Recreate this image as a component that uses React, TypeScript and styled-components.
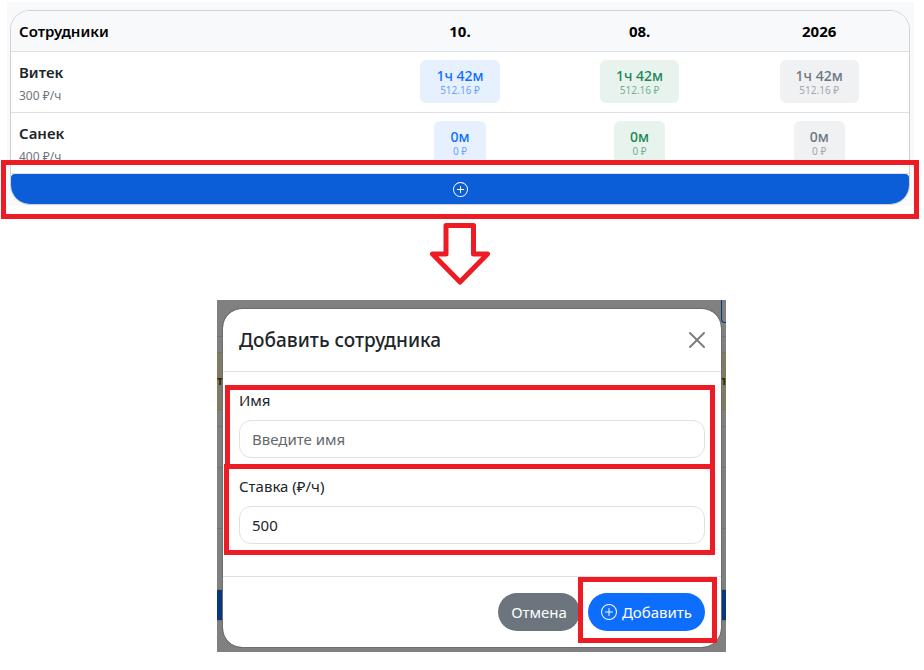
import React, { useState } from "react";
import styled, { createGlobalStyle } from "styled-components";
import { BsPlusCircle } from "react-icons/bs";

const GlobalStyle = createGlobalStyle`
  *, *::before, *::after { box-sizing: border-box; }
  body {
    margin: 0;
    background: #fff;
    color: #212529;
    font: 16px/24px "Noto Sans", "Open Sans", sans-serif;
  }
  button, input { font: inherit; }
`;

type Tone = "blue" | "green" | "gray";

const tones: Record<Tone, { text: string; back: string }> = {
  blue: { text: "#0d6efd", back: "#e7f0ff" },
  green: { text: "#198754", back: "#e8f3ee" },
  gray: { text: "#6c757d", back: "#f0f1f2" },
};

const Page = styled.main`
  padding: 2px 10px 18px 7px;
`;

const Shell = styled.section`
  padding: 8px 4px 1px 3px;
  background: #f8f9fa;
`;

const Card = styled.div`
  border: 1px solid #cfd2d5;
  border-radius: 20px;
  background: #fff;
`;

const Table = styled.table`
  width: 100%;
  table-layout: fixed;
  border-collapse: separate;
  border-spacing: 0;
`;

const HeadCell = styled.th<{ $lead?: boolean }>`
  width: ${(p) => (p.$lead ? "40%" : "20%")};
  height: 41px;
  padding: 0 8px;
  border-bottom: 1px solid #dee2e6;
  background: #f8f9fa;
  color: #000;
  font-size: 15px;
  font-weight: ${(p) => (p.$lead ? 600 : 700)};
  text-align: ${(p) => (p.$lead ? "left" : "center")};
  &:first-child { border-top-left-radius: 19px; }
  &:last-child { border-top-right-radius: 19px; }
`;

const NameCell = styled.th`
  height: 61px;
  padding: 8px 8px 4px;
  border-bottom: 1px solid #dee2e6;
  font-size: 15px;
  font-weight: 600;
  text-align: left;
`;

const Rate = styled.small`
  display: block;
  color: #6c757d;
  font-size: 12px;
  font-weight: 400;
  line-height: 24px;
`;

const Cell = styled.td`
  padding: 8px 0 0;
  border-bottom: 1px solid #dee2e6;
  text-align: center;
  vertical-align: top;
`;

const Chip = styled.span<{ $tone: Tone }>`
  display: inline-block;
  padding: 8px 16px 7px;
  border-radius: 6px;
  background: ${(p) => tones[p.$tone].back};
  color: ${(p) => tones[p.$tone].text};
  font-size: 14px;
  font-weight: 500;
  line-height: 16px;
  vertical-align: top;
`;

const Money = styled.small`
  display: block;
  font-size: 10px;
  font-weight: 400;
  line-height: 12px;
  opacity: 0.6;
`;

const Anchor = styled.div`
  position: relative;
`;

const Mark = styled.span<{ $inset: string }>`
  position: absolute;
  inset: ${(p) => p.$inset};
  border: 5px solid #ed1c24;
  pointer-events: none;
`;

const AddBar = styled.button`
  display: flex;
  width: 100%;
  height: 30px;
  align-items: center;
  justify-content: center;
  border: 0;
  border-radius: 4px 4px 19px 19px;
  background: #0b5ed7;
  color: #fff;
`;

const Arrow = styled.svg`
  display: block;
  margin: 17px auto 15px;
`;

const DialogRow = styled.section`
  display: grid;
  grid-template-columns: 210fr 509fr 188fr;
`;

const Backdrop = styled.div`
  display: grid;
  grid-column: 2;
  overflow: hidden;
  background: #808080;
  > * { grid-area: 1 / 1; }
`;

const Behind = styled.div`
  display: flex;
  flex-direction: column;
`;

const Strip = styled.div<{ $height: number; $back?: string; $line?: string }>`
  display: flex;
  height: ${(p) => p.$height}px;
  align-items: center;
  justify-content: space-between;
  border-bottom: 1px solid ${(p) => p.$line ?? "#6f7173"};
  background: ${(p) => p.$back ?? "transparent"};
  color: #3a2800;
  font-size: 12px;
  font-weight: 700;
`;

const Corner = styled.span`
  width: 6px;
  height: 23px;
  margin: 0 -1px auto auto;
  border: solid #07377f;
  border-width: 0 0 1px 1px;
  border-bottom-left-radius: 4px;
`;

const Dialog = styled.form`
  margin: 8px 4px 4px 5px;
  border: 1px solid #6c6d6e;
  border-radius: 20px;
  background: #fff;
  background-clip: padding-box;
`;

const DialogHead = styled.header`
  display: flex;
  align-items: center;
  justify-content: space-between;
  padding: 16px;
  border-bottom: 1px solid #dee2e6;
`;

const Title = styled.h2`
  margin: 0;
  font-size: 19px;
  font-weight: 500;
  line-height: 30px;
`;

const Close = styled.button`
  display: flex;
  padding: 0;
  border: 0;
  background: none;
  color: #000;
  opacity: 0.5;
`;

const Fields = styled.div`
  display: grid;
  gap: 16px;
  padding: 16px 16px 32px;
`;

const Label = styled.label`
  display: block;
  margin-bottom: 8px;
  font-size: 15px;
`;

const Input = styled.input`
  display: block;
  width: 100%;
  height: 38px;
  padding: 0 12px;
  border: 1px solid #dee2e6;
  border-radius: 12px;
  outline: 0;
  background: #fff;
  color: #212529;
  font-size: 15px;
  &::placeholder { color: #63686d; opacity: 1; }
`;

const DialogFoot = styled.footer`
  display: flex;
  justify-content: flex-end;
  gap: 8px;
  padding: 16px;
  border-top: 1px solid #dee2e6;
`;

const Button = styled.button<{ $primary?: boolean }>`
  display: flex;
  height: 38px;
  align-items: center;
  gap: 5px;
  padding: 0 13px;
  border: 0;
  border-radius: 19px;
  background: ${(p) => (p.$primary ? "#0d6efd" : "#6c757d")};
  color: #fff;
  font-size: 15px;
`;

const employees = [
  { name: "Витек", rate: "300 ₽/ч", time: "1ч 42м", money: "512.16 ₽" },
  { name: "Санек", rate: "400 ₽/ч", time: "0м", money: "0 ₽" },
];

const columns: { label: string; tone: Tone }[] = [
  { label: "10.", tone: "blue" },
  { label: "08.", tone: "green" },
  { label: "2026", tone: "gray" },
];

export default function App() {
  const [name, setName] = useState("");
  const [rate, setRate] = useState("500");

  return (
    <Page>
      <GlobalStyle />
      <Shell>
        <Card>
          <Table>
            <thead>
              <tr>
                <HeadCell $lead>Сотрудники</HeadCell>
                {columns.map((c) => (
                  <HeadCell key={c.label}>{c.label}</HeadCell>
                ))}
              </tr>
            </thead>
            <tbody>
              {employees.map((e) => (
                <tr key={e.name}>
                  <NameCell scope="row">
                    {e.name}
                    <Rate>{e.rate}</Rate>
                  </NameCell>
                  {columns.map((c) => (
                    <Cell key={c.label}>
                      <Chip $tone={c.tone}>
                        {e.time}
                        <Money>{e.money}</Money>
                      </Chip>
                    </Cell>
                  ))}
                </tr>
              ))}
            </tbody>
          </Table>
          <Anchor>
            <AddBar type="button" aria-label="Добавить сотрудника">
              <BsPlusCircle size={15} />
            </AddBar>
            <Mark $inset="-14px -10px -15px" />
          </Anchor>
        </Card>
      </Shell>

      <Arrow width="62" height="62" viewBox="0 0 62 62" aria-hidden="true">
        <path
          d="M16 2.5H43.5V31H57.5L30 59L2.5 31H16Z"
          fill="#fff"
          stroke="#ed1c24"
          strokeWidth="5"
          strokeLinejoin="round"
        />
      </Arrow>

      <DialogRow>
        <Backdrop>
          <Behind aria-hidden="true">
            <Strip $height={37}>
              <Corner />
            </Strip>
            <Strip $height={16} $line="#807349" />
            <Strip $height={57} $back="#807a67" $line="#807349">
              <span>т</span>
              <span>п</span>
            </Strip>
            <Strip $height={17} />
            <Strip $height={41} />
            <Strip $height={61} />
            <Strip $height={61} />
            <Strip $height={31} $back="#07377f" />
          </Behind>
          <Dialog onSubmit={(e) => e.preventDefault()}>
            <DialogHead>
              <Title>Добавить сотрудника</Title>
              <Close type="button" aria-label="Закрыть">
                <svg width="16" height="16" viewBox="0 0 16 16" fill="currentColor">
                  <path d="M.293.293a1 1 0 0 1 1.414 0L8 6.586 14.293.293a1 1 0 1 1 1.414 1.414L9.414 8l6.293 6.293a1 1 0 0 1-1.414 1.414L8 9.414l-6.293 6.293a1 1 0 0 1-1.414-1.414L6.586 8 .293 1.707a1 1 0 0 1 0-1.414z" />
                </svg>
              </Close>
            </DialogHead>
            <Fields>
              <Anchor>
                <Label htmlFor="name">Имя</Label>
                <Input
                  id="name"
                  placeholder="Введите имя"
                  value={name}
                  onChange={(e) => setName(e.target.value)}
                />
                <Mark $inset="-3px -10px -11px -14px" />
              </Anchor>
              <Anchor>
                <Label htmlFor="rate">Ставка (₽/ч)</Label>
                <Input
                  id="rate"
                  inputMode="numeric"
                  value={rate}
                  onChange={(e) => setRate(e.target.value)}
                />
                <Mark $inset="-10px -10px -11px -15px" />
              </Anchor>
            </Fields>
            <DialogFoot>
              <Button type="button">Отмена</Button>
              <Anchor>
                <Button type="submit" $primary>
                  <BsPlusCircle size={16} />
                  Добавить
                </Button>
                <Mark $inset="-16px -12px -12px -10px" />
              </Anchor>
            </DialogFoot>
          </Dialog>
        </Backdrop>
      </DialogRow>
    </Page>
  );
}
